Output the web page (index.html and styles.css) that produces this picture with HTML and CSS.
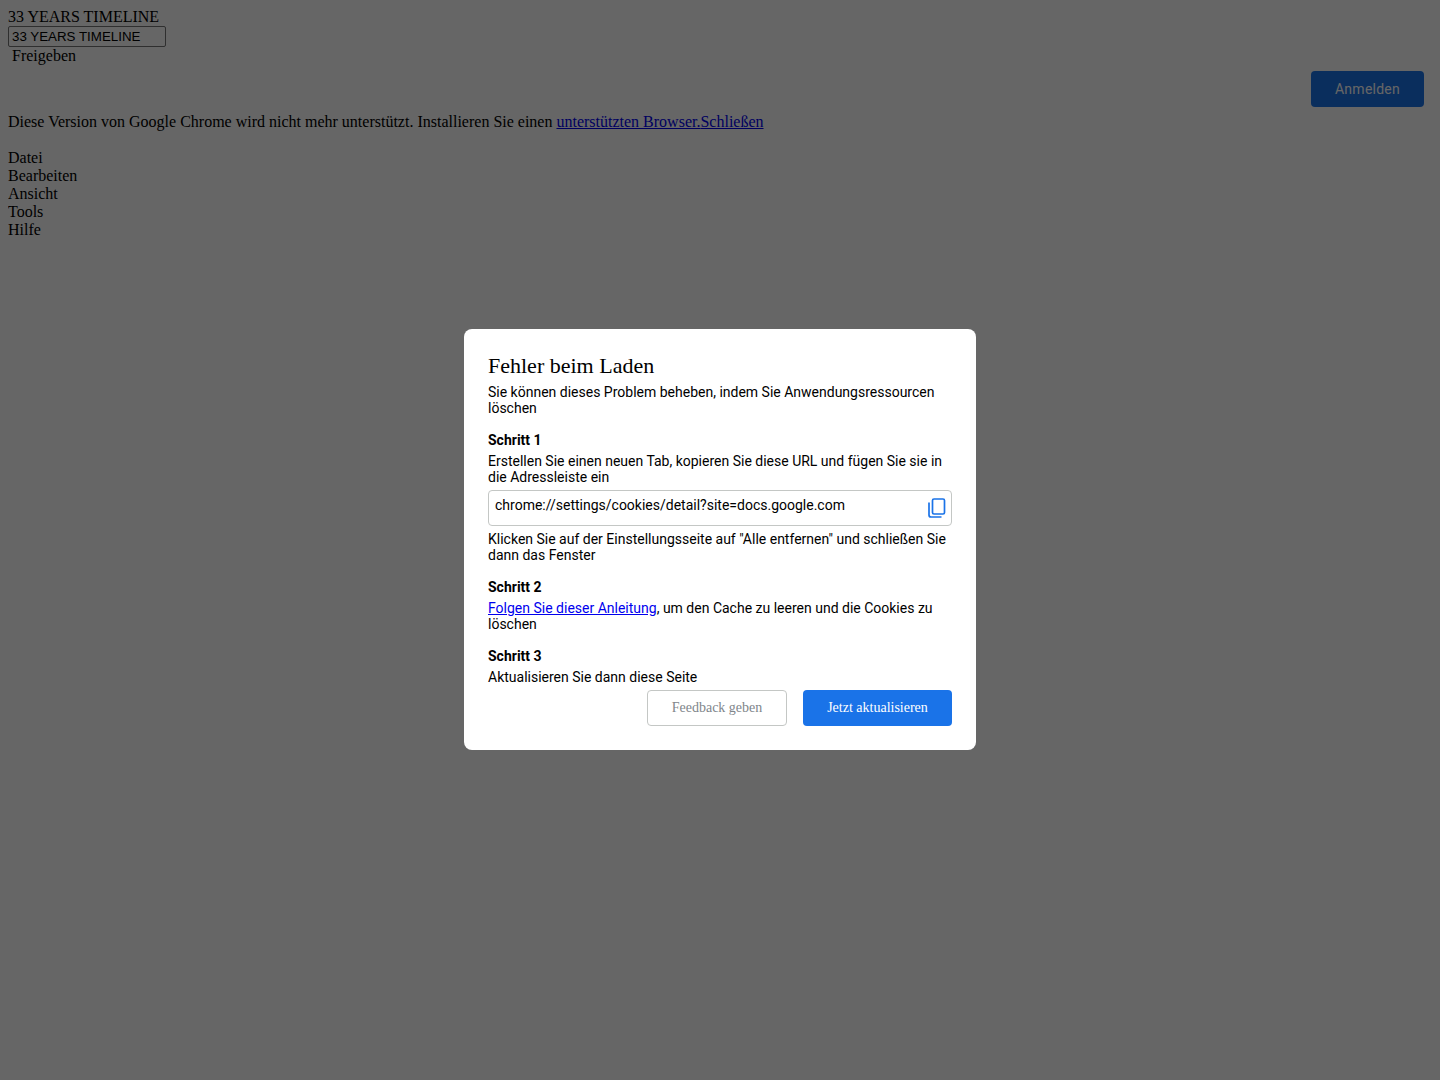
FILE: index.html
```html
<!DOCTYPE html>
<html lang="de">
<head>
    <meta charset="UTF-8">
    <meta name="viewport" content="width=device-width, initial-scale=1.0">
    <title>33 YEARS TIMELINE</title>
    <link rel="stylesheet" href="styles.css">
</head>
<body>
    <div class="doc-title">33 YEARS TIMELINE</div>
    <input class="title-input" type="text" value="33 YEARS TIMELINE">
    <div class="share">Freigeben</div>

    <div class="signin-row">
        <button class="signin" type="button">Anmelden</button>
    </div>

    <div class="notice">Diese Version von Google Chrome wird nicht mehr unterstützt. Installieren Sie einen <a href="#">unterstützten Browser.</a><a href="#">Schließen</a></div>

    <div class="menu">
        <div>Datei</div>
        <div>Bearbeiten</div>
        <div>Ansicht</div>
        <div>Tools</div>
        <div>Hilfe</div>
    </div>

    <div class="backdrop"></div>

    <div class="dialog">
        <div class="dialog-title">Fehler beim Laden</div>
        <div class="dialog-body">
            <p>Sie können dieses Problem beheben, indem Sie Anwendungsressourcen löschen</p>

            <h4>Schritt 1</h4>
            <p>Erstellen Sie einen neuen Tab, kopieren Sie diese URL und fügen Sie sie in die Adressleiste ein</p>
            <div class="url-box">
                <span>chrome://settings/cookies/detail?site=docs.google.com</span>
                <svg class="copy-icon" width="24" height="24" viewBox="0 0 24 24" fill="none" stroke="#1a73e8" stroke-width="1.7">
                    <rect x="7.5" y="3" width="12" height="15" rx="1.5"/>
                    <path d="M4 6.5V19a2 2 0 0 0 2 2h10.5"/>
                </svg>
            </div>
            <p>Klicken Sie auf der Einstellungsseite auf "Alle entfernen" und schließen Sie dann das Fenster</p>

            <h4>Schritt 2</h4>
            <p><a href="#">Folgen Sie dieser Anleitung</a>, um den Cache zu leeren und die Cookies zu löschen</p>

            <h4>Schritt 3</h4>
            <p>Aktualisieren Sie dann diese Seite</p>
        </div>
        <div class="dialog-actions">
            <button class="btn btn-outline" type="button">Feedback geben</button>
            <button class="btn btn-primary" type="button">Jetzt aktualisieren</button>
        </div>
    </div>
</body>
</html>
```

FILE: styles.css
```css
body {
    margin: 8px;
    font-family: "Liberation Serif", serif;
    font-size: 16px;
    line-height: 18px;
    color: #000;
    background: #fff;
}

/* Top of the page */
.title-input {
    display: block;
    box-sizing: border-box;
    width: 158px;
    height: 21px;
    padding: 1px 3px;
    border: 1px solid #767676;
    border-radius: 2px;
    font-family: "Liberation Sans", sans-serif;
    font-size: 13.333px;
    color: #000;
}

.share {
    padding-left: 4px;
}

.signin-row {
    display: flex;
    justify-content: flex-end;
    margin: 6px 8px 5px 0;
}

.signin {
    width: 113px;
    height: 36px;
    border: none;
    border-radius: 4px;
    background: #1a73e8;
    color: #fff;
    font-family: Roboto, sans-serif;
    font-size: 14px;
    letter-spacing: 0.25px;
}

.notice {
    margin-top: 6px;
    margin-bottom: 18px;
}

a {
    color: #0000ee;
}

/* Dialog */
.backdrop {
    position: fixed;
    top: 0;
    right: 0;
    bottom: 0;
    left: 0;
    background: rgba(0, 0, 0, 0.6);
}

.dialog {
    position: fixed;
    top: 329px;
    left: 464px;
    box-sizing: border-box;
    width: 512px;
    height: 421px;
    padding: 24px;
    border-radius: 8px;
    background: #fff;
    display: flex;
    flex-direction: column;
}

.dialog-title {
    font-size: 22px;
    line-height: 26px;
    margin-bottom: 5px;
}

.dialog-body {
    font-family: Roboto, sans-serif;
    font-size: 14px;
    line-height: 16px;
}

.dialog-body p {
    margin: 0;
}

.dialog-body h4 {
    margin: 16px 0 5px;
    font-size: 14px;
    line-height: 16px;
    font-weight: 700;
}

.url-box {
    display: flex;
    justify-content: space-between;
    box-sizing: border-box;
    height: 36px;
    margin: 5px 0;
    padding: 6px 2px 0 6px;
    border: 1px solid #c4c7c5;
    border-radius: 4px;
}

.copy-icon {
    margin-top: -1px;
}

.dialog-actions {
    display: flex;
    justify-content: flex-end;
    gap: 16px;
    margin-top: 5px;
}

.btn {
    box-sizing: border-box;
    height: 36px;
    border-radius: 4px;
    font-family: "Liberation Serif", serif;
    font-size: 14px;
}

.btn-outline {
    width: 140px;
    border: 1px solid #c4c7c5;
    background: #fff;
    color: #80868b;
}

.btn-primary {
    width: 149px;
    border: none;
    background: #1a73e8;
    color: #fff;
}
```
